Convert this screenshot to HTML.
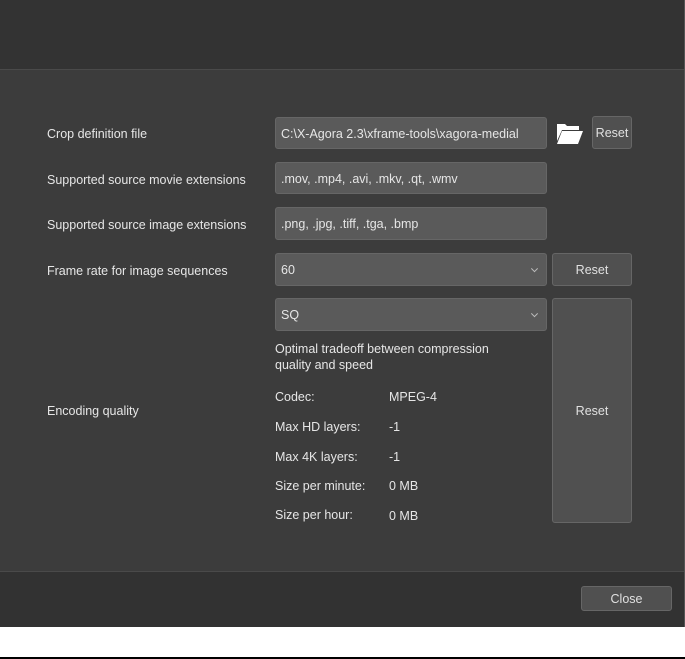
<!DOCTYPE html>
<html><head><style>
body{margin:0;width:685px;height:659px;background:#fff;position:relative;overflow:hidden;font-family:"Liberation Sans",sans-serif;font-size:12.5px;color:#e6e6e6}
div{position:absolute;box-sizing:border-box}
.hdr{left:0;top:0;width:685px;height:70px;background:#333;border-bottom:1px solid #4a4a4a}
.body{left:0;top:70px;width:685px;height:501px;background:#3c3c3c}
.ftr{left:0;top:571px;width:685px;height:56px;background:#323232;border-top:1px solid #4a4a4a}
.edge{left:684px;top:0;width:1px;height:627px;background:#555}
.line{left:0;top:657px;width:685px;height:2px;background:#000}
.lbl{left:47px;line-height:16px}
.in{left:275px;width:272px;background:#5a5a5a;border:1px solid #666;border-radius:3px;padding-left:5px;padding-top:1px;display:flex;align-items:center;white-space:nowrap;overflow:hidden}
.btn{background:#505050;border:1px solid #666;border-radius:3px;display:flex;align-items:center;justify-content:center;color:#e0e0e0;padding-top:1px}
.t{line-height:16px}
.chev{position:absolute;right:9px;top:50%;width:4px;height:4px;border-right:1.2px solid #bbb;border-bottom:1.2px solid #bbb;transform:translateY(-75%) rotate(45deg)}
</style></head><body>
<div class="hdr"></div>
<div class="body"></div>
<div class="ftr"></div>
<div class="edge"></div>
<div class="line"></div>

<div class="lbl" style="top:126px">Crop definition file</div>
<div class="lbl" style="top:172px">Supported source movie extensions</div>
<div class="lbl" style="top:217px">Supported source image extensions</div>
<div class="lbl" style="top:263px">Frame rate for image sequences</div>
<div class="lbl" style="top:403px">Encoding quality</div>

<div class="in" style="top:117px;height:32px">C:\X-Agora 2.3\xframe-tools\xagora-medial</div>
<svg style="position:absolute;left:555px;top:121px" width="30" height="25" viewBox="0 0 30 25"><path d="M2 3h8l2 2h12v4H7L2 20z" fill="#fff"/><path d="M7 10h21l-5 13H2z" fill="#fff"/></svg>
<div class="btn" style="left:592px;top:116px;width:40px;height:33px">Reset</div>

<div class="in" style="top:162px;height:32px">.mov, .mp4, .avi, .mkv, .qt, .wmv</div>
<div class="in" style="top:207px;height:33px">.png, .jpg, .tiff, .tga, .bmp</div>
<div class="in" style="top:253px;height:33px">60<span class="chev"></span></div>
<div class="btn" style="left:552px;top:253px;width:80px;height:33px">Reset</div>
<div class="in" style="top:298px;height:33px">SQ<span class="chev"></span></div>
<div class="btn" style="left:552px;top:298px;width:80px;height:225px">Reset</div>

<div class="t" style="left:275px;top:341px">Optimal tradeoff between compression<br>quality and speed</div>
<div class="t" style="left:275px;top:389px">Codec:</div><div class="t" style="left:389px;top:389px">MPEG-4</div>
<div class="t" style="left:275px;top:419px">Max HD layers:</div><div class="t" style="left:389px;top:419px">-1</div>
<div class="t" style="left:275px;top:449px">Max 4K layers:</div><div class="t" style="left:389px;top:449px">-1</div>
<div class="t" style="left:275px;top:478px">Size per minute:</div><div class="t" style="left:389px;top:478px">0 MB</div>
<div class="t" style="left:275px;top:507px">Size per hour:</div><div class="t" style="left:389px;top:508px">0 MB</div>

<div class="btn" style="left:581px;top:586px;width:91px;height:25px">Close</div>
</body></html>
